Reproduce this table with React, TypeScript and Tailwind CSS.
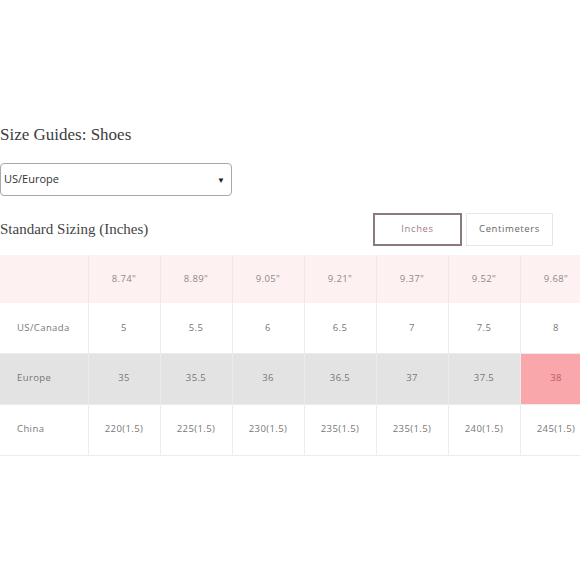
const heads = ["8.74\"", "8.89\"", "9.05\"", "9.21\"", "9.37\"", "9.52\"", "9.68\""];

const rows = [
  { label: "US/Canada", cells: ["5", "5.5", "6", "6.5", "7", "7.5", "8"], bg: "bg-white" },
  { label: "Europe", cells: ["35", "35.5", "36", "36.5", "37", "37.5", "38"], bg: "bg-[#e3e3e3]" },
  { label: "China", cells: ["220(1.5)", "225(1.5)", "230(1.5)", "235(1.5)", "235(1.5)", "240(1.5)", "245(1.5)"], bg: "bg-white" },
];

const rowHeights = ["h-[50px]", "h-[51px]", "h-[51px]"];

export default function App() {
  return (
    <div className="w-[580px] h-[580px] bg-white overflow-hidden pt-[125px]">
      <h2 className="text-[17px] leading-[20px] text-[#3c3c3c] font-['Liberation_Serif',serif]">
        Size Guides: Shoes
      </h2>

      <div className="mt-[18px] w-[232px] h-[33px] border border-[#a8a8a8] rounded-[4px] flex items-center justify-between pl-[3px] pr-[6px]">
        <span className="text-[11px] text-[#333] font-['Open_Sans',sans-serif]">US/Europe</span>
        <span className="text-[8px] text-[#222]">▼</span>
      </div>

      <div className="mt-[17px] flex items-center pr-[27px]">
        <h3 className="text-[15px] text-[#444] font-['Liberation_Serif',serif]">Standard Sizing (Inches)</h3>
        <div className="ml-auto flex gap-[4px]">
          <button className="w-[89px] h-[33px] border-2 border-[#8c7880] text-[9.5px] tracking-[0.6px] text-[#a07c88] font-['Open_Sans',sans-serif]">
            Inches
          </button>
          <button className="w-[87px] h-[33px] border border-[#e6e6e6] text-[9.5px] tracking-[0.6px] text-[#666] font-['Open_Sans',sans-serif]">
            Centimeters
          </button>
        </div>
      </div>

      <div className="mt-[9px] w-[580px] overflow-hidden">
        <table className="w-[592px] table-fixed border-collapse font-['Open_Sans',sans-serif] text-[9.5px] tracking-[0.4px] text-[#777]">
          <colgroup>
            <col className="w-[88px]" />
            {heads.map((h) => (
              <col key={h} className="w-[72px]" />
            ))}
          </colgroup>
          <thead>
            <tr className="h-[48px] bg-[#fdf2f1]">
              <th className="border-r border-[#f6e4e2]"></th>
              {heads.map((h) => (
                <th key={h} className="font-normal text-[#8a8a8a] border-r border-[#f6e4e2]">
                  {h}
                </th>
              ))}
            </tr>
          </thead>
          <tbody>
            {rows.map((r, i) => (
              <tr key={r.label} className={`${rowHeights[i]} ${r.bg} border-b border-[#ececec]`}>
                <td className="pl-[17px] text-left border-r border-[#ececec]">{r.label}</td>
                {r.cells.map((c, j) => {
                  const hot = r.label === "Europe" && j === 6;
                  return (
                    <td
                      key={j}
                      className={`text-center border-r border-[#ececec] ${hot ? "bg-[#f9a7aa] text-[#b85c62]" : ""}`}
                    >
                      {c}
                    </td>
                  );
                })}
              </tr>
            ))}
          </tbody>
        </table>
      </div>
    </div>
  );
}
